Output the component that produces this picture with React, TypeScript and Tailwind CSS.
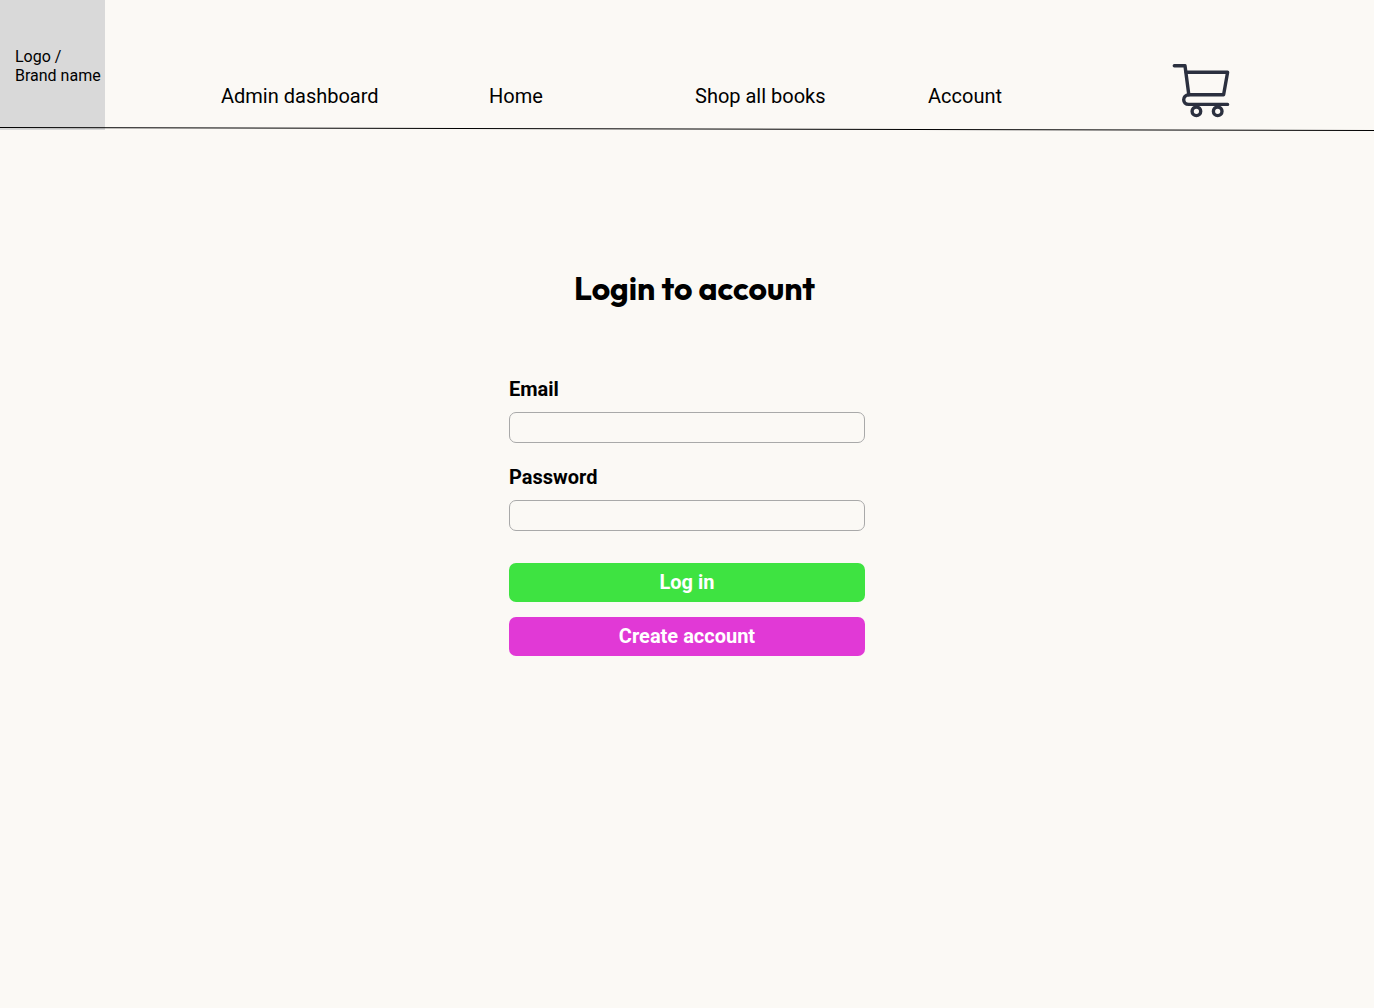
import React from "react";

function CartIcon() {
  return (
    <svg
      width="58"
      height="56"
      viewBox="0 0 58 56"
      fill="none"
      stroke="#2b303f"
      strokeWidth="3.4"
      strokeLinecap="round"
      strokeLinejoin="round"
      aria-hidden="true"
    >
      <path d="M2.3 3.7H13L16.8 32.8" />
      <path d="M14.2 10.2H55.6L51.6 32.8H16.8C10 33.2 10 42.4 16.8 42.4H55.6" />
      <circle cx="24.4" cy="49.3" r="4.3" />
      <circle cx="45.7" cy="49.3" r="4.3" />
    </svg>
  );
}

function Header() {
  return (
    <header className="relative flex h-[130px]">
      <a
        href="#"
        className="flex w-[105px] shrink-0 items-center bg-[#d9d9d9] pt-0.5 pl-[15px] text-base leading-[19px] whitespace-nowrap"
      >
        <span>
          Logo /<br />
          Brand name
        </span>
      </a>
      <nav className="grid flex-1 grid-cols-[268fr_206fr_233fr_244fr_202fr] items-end pb-3 pl-[116px] text-xl leading-6 whitespace-nowrap">
        <a href="#" className="pb-2.5">Admin dashboard</a>
        <a href="#" className="pb-2.5">Home</a>
        <a href="#" className="pb-2.5">Shop all books</a>
        <a href="#" className="pb-2.5">Account</a>
        <a href="#" aria-label="Cart" className="justify-self-start">
          <CartIcon />
        </a>
      </nav>
      <svg
        className="absolute inset-x-0 top-[126px] h-[6px] w-full"
        viewBox="0 0 1374 6"
        preserveAspectRatio="none"
        aria-hidden="true"
      >
        <line x1="0" y1="1.5" x2="1374" y2="4.5" stroke="#000" strokeWidth="1" />
      </svg>
    </header>
  );
}

function Field({ id, label, type }: { id: string; label: string; type: string }) {
  return (
    <div className="flex flex-col gap-[11px]">
      <label htmlFor={id} className="text-xl leading-6 font-bold">
        {label}
      </label>
      <input
        id={id}
        type={type}
        className="h-[31px] w-full rounded-[7px] border border-[#a9a9a9] bg-transparent px-2"
      />
    </div>
  );
}

export default function App() {
  return (
    <div className="min-h-screen bg-[#fbf9f5] font-[Roboto,sans-serif] text-black">
      <Header />
      <main className="mx-auto flex w-full max-w-[356px] flex-col pt-[138px]">
        <h1 className="pl-[15px] text-center font-[Outfit,Lato,sans-serif] text-[32px] leading-10 font-bold whitespace-nowrap">
          Login to account
        </h1>
        <form className="mt-[69px] flex flex-col" onSubmit={(e) => e.preventDefault()}>
          <div className="flex flex-col gap-[22px]">
            <Field id="email" label="Email" type="email" />
            <Field id="password" label="Password" type="password" />
          </div>
          <div className="mt-8 flex flex-col gap-[15px] text-xl leading-6 font-bold text-white">
            <button type="submit" className="h-[39px] rounded-[7px] bg-[#3ee341] pb-0.5">
              Log in
            </button>
            <button type="button" className="h-[39px] rounded-[7px] bg-[#e139d6] pb-0.5">
              Create account
            </button>
          </div>
        </form>
      </main>
    </div>
  );
}
